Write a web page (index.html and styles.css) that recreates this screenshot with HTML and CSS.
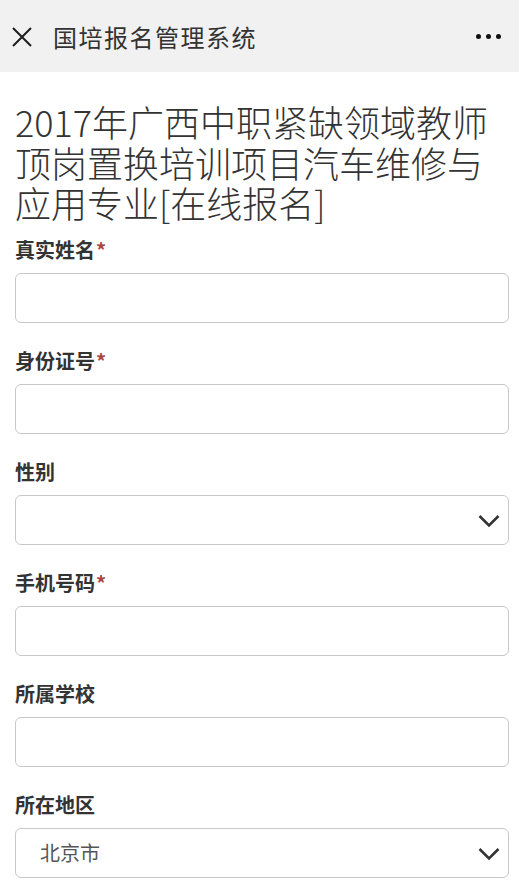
FILE: index.html
```html
<!DOCTYPE html>
<html lang="zh-CN">
<head>
<meta charset="utf-8">
<title>国培报名管理系统</title>
<link rel="stylesheet" href="styles.css">
</head>
<body>
<header class="topbar">
  <svg class="close" width="22" height="22" viewBox="0 0 22 22"><path d="M2 2L20 20M20 2L2 20" stroke="#1e1e1e" stroke-width="2" fill="none"/></svg>
  <span class="topbar-title">国培报名管理系统</span>
  <span class="more"><i></i><i></i><i></i></span>
</header>
<main class="page">
  <h1 class="title">2017年广西中职紧缺领域教师顶岗置换培训项目汽车维修与应用专业[在线报名]</h1>
  <form class="form">
    <div class="field">
      <label class="label">真实姓名<span class="req">*</span></label>
      <input class="control" type="text">
    </div>
    <div class="field">
      <label class="label">身份证号<span class="req">*</span></label>
      <input class="control" type="text">
    </div>
    <div class="field">
      <label class="label">性别</label>
      <div class="select-wrap">
        <select class="control select"><option></option><option>男</option><option>女</option></select>
        <svg class="chev" width="22" height="14" viewBox="0 0 22 14"><path d="M1.5 2L11 11.5L20.5 2" stroke="#333" stroke-width="2.6" fill="none"/></svg>
      </div>
    </div>
    <div class="field">
      <label class="label">手机号码<span class="req">*</span></label>
      <input class="control" type="text">
    </div>
    <div class="field">
      <label class="label">所属学校</label>
      <input class="control" type="text">
    </div>
    <div class="field">
      <label class="label">所在地区</label>
      <div class="select-wrap">
        <select class="control select"><option>北京市</option></select>
        <svg class="chev" width="22" height="14" viewBox="0 0 22 14"><path d="M1.5 2L11 11.5L20.5 2" stroke="#333" stroke-width="2.6" fill="none"/></svg>
      </div>
    </div>
  </form>
</main>
</body>
</html>
```
FILE: styles.css
```css
* { box-sizing: border-box; }
html, body { margin: 0; padding: 0; }
body {
  background: #fff;
  font-family: "Noto Sans CJK SC", "Noto Sans", sans-serif;
  color: #333;
  width: 519px;
  overflow: hidden;
}
.topbar {
  height: 72px;
  background: #f1f1f1;
  display: flex;
  align-items: center;
  padding: 0 16px 0 11px;
}
.close { flex: none; margin-top: 1px; }
.topbar-title {
  margin-left: 20px;
  font-size: 24px;
  letter-spacing: 1.5px;
  color: #333;
  flex: 1;
}
.more { display: flex; gap: 5px; margin-right: 2px; }
.more i {
  width: 5px; height: 5px; border-radius: 50%;
  background: #111; display: block;
}
.page { padding: 29px 10px 0 15px; }
.title {
  margin: 0;
  font-size: 36px;
  line-height: 40.5px;
  font-weight: 300;
  color: #333;
}
.form { margin-top: 13px; }
.field { margin-bottom: 24px; }
.label {
  display: block;
  font-size: 20px;
  line-height: 28px;
  font-weight: 700;
  color: #333;
  margin-bottom: 9px;
}
.req { color: #a94442; font-size: 20px; margin-left: 1px; }
.control {
  display: block;
  width: 100%;
  height: 50px;
  border: 1px solid #c8c8c8;
  border-radius: 6px;
  background: #fff;
  font-family: inherit;
  font-size: 20px;
  color: #555;
  padding: 0 24px;
  outline: none;
  -webkit-appearance: none;
  appearance: none;
}
.select-wrap { position: relative; }
.chev { position: absolute; right: 9px; top: 19px; pointer-events: none; }
```
